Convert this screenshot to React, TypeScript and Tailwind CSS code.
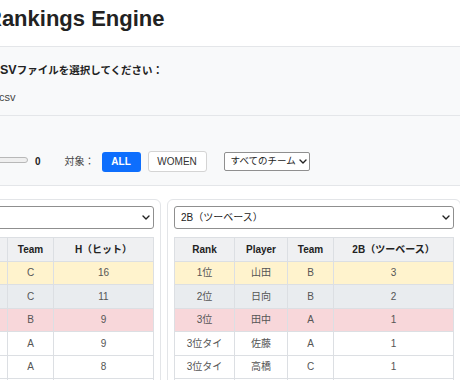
import React from "react";

type Tier = "gold" | "silver" | "bronze" | "none";

type Row = {
  rank: string;
  player: string;
  team: string;
  value: number;
  tier: Tier;
};

const tierBg: Record<Tier, string> = {
  gold: "bg-[#fff3cd]",
  silver: "bg-[#e9ecef]",
  bronze: "bg-[#f8d7da]",
  none: "bg-white",
};

const hitRows: Row[] = [
  { rank: "1位", player: "鈴木", team: "C", value: 16, tier: "gold" },
  { rank: "2位", player: "伊藤", team: "C", value: 11, tier: "silver" },
  { rank: "3位", player: "山田", team: "B", value: 9, tier: "bronze" },
  { rank: "3位タイ", player: "田中", team: "A", value: 9, tier: "none" },
  { rank: "5位", player: "佐藤", team: "A", value: 8, tier: "none" },
  { rank: "6位", player: "高橋", team: "C", value: 7, tier: "none" },
];

const doubleRows: Row[] = [
  { rank: "1位", player: "山田", team: "B", value: 3, tier: "gold" },
  { rank: "2位", player: "日向", team: "B", value: 2, tier: "silver" },
  { rank: "3位", player: "田中", team: "A", value: 1, tier: "bronze" },
  { rank: "3位タイ", player: "佐藤", team: "A", value: 1, tier: "none" },
  { rank: "3位タイ", player: "高橋", team: "C", value: 1, tier: "none" },
  { rank: "3位タイ", player: "伊藤", team: "C", value: 1, tier: "none" },
];

function Chevron() {
  return (
    <svg width="8" height="5" viewBox="0 0 8 5" fill="none" className="shrink-0">
      <path d="M1 1l3 3 3-3" stroke="#222" strokeWidth="1.4" strokeLinecap="round" strokeLinejoin="round" />
    </svg>
  );
}

function RankingCard({
  stat,
  rows,
  cols,
}: {
  stat: string;
  rows: Row[];
  cols: [string, string, string, string];
}) {
  const cell = "border border-[#dcdfe3] p-0 text-center h-[23.5px]";
  return (
    <div className="rounded-[6px] border border-[#e3e5e8] bg-white px-[6px] pt-[6px] pb-[7px]">
      <div className="flex h-[23px] items-center justify-between rounded-[3px] border border-[#8f8f8f] bg-white pl-[6px] pr-[3px] text-[10px] text-[#222]">
        <span>{stat}</span>
        <Chevron />
      </div>
      <table className="mt-[8px] w-full table-fixed border-collapse text-[10px]">
        <colgroup>
          <col className={cols[0]} />
          <col className={cols[1]} />
          <col className={cols[2]} />
          <col className={cols[3]} />
        </colgroup>
        <thead>
          <tr className="bg-[#eff0f2] font-bold text-[#222]">
            <th className={cell}>Rank</th>
            <th className={cell}>Player</th>
            <th className={cell}>Team</th>
            <th className={cell}>{stat}</th>
          </tr>
        </thead>
        <tbody className="text-[#555]">
          {rows.map((r, i) => (
            <tr key={i} className={tierBg[r.tier]}>
              <td className={cell}>{r.rank}</td>
              <td className={cell}>{r.player}</td>
              <td className={cell}>{r.team}</td>
              <td className={cell}>{r.value}</td>
            </tr>
          ))}
        </tbody>
      </table>
    </div>
  );
}

export default function App() {
  return (
    <div className="h-[380px] w-[460px] overflow-hidden bg-white font-['Liberation_Sans','Noto_Sans_CJK_JP',sans-serif] text-[#222]">
      <div className="h-[46px] pt-[6px]">
        <h1 className="-ml-[14px] whitespace-nowrap text-[22px] font-bold leading-[26px] text-[#222]">
          Rankings Engine
        </h1>
      </div>

      {/* file input */}
      <div className="h-[70px] border-y border-[#e4e6e9] bg-[#f8f9fa] pt-[15px]">
        <div className="-ml-[9px] whitespace-nowrap text-[12.5px] font-bold leading-[16px]">
          CSV<span className="text-[10.5px]">ファイルを選択してください：</span>
        </div>
        <div className="-ml-[1px] mt-[12px] text-[11px] leading-[14px] text-[#444]">csv</div>
      </div>

      {/* filters */}
      <div className="h-[70px] border-b border-[#e4e6e9] bg-[#f8f9fa] pt-[35px]">
        <div className="flex h-[21px] items-center whitespace-nowrap text-[10px]">
          <div className="-ml-[72px] mb-[4px] h-[6px] w-[100px] shrink-0 rounded-full border border-[#b8b8b8] bg-[#efefef]" />
          <span className="ml-[7px] font-bold">0</span>
          <span className="ml-[24px] text-[#444]">対象：</span>
          <button className="ml-[7px] h-[20px] w-[39px] rounded-[3px] bg-[#0d6efd] font-bold text-white">
            ALL
          </button>
          <button className="ml-[7px] h-[21px] w-[59px] rounded-[3px] border border-[#d4d4d4] bg-white text-[#333]">
            WOMEN
          </button>
          <div className="ml-[17px] flex h-[19px] w-[86px] items-center justify-between rounded-[2px] border border-[#8f8f8f] bg-white pl-[6px] pr-[2px] text-[9.5px] text-[#222]">
            <span>すべてのチーム</span>
            <Chevron />
          </div>
        </div>
      </div>

      {/* rankings */}
      <div className="-ml-[133px] mt-[13px] grid w-[594px] grid-cols-2 gap-[6px]">
        <RankingCard
          stat="H（ヒット）"
          rows={hitRows}
          cols={["w-[70px]", "w-[63px]", "w-[46px]", "w-auto"]}
        />
        <RankingCard
          stat="2B（ツーベース）"
          rows={doubleRows}
          cols={["w-[60px]", "w-[53px]", "w-[46px]", "w-auto"]}
        />
      </div>
    </div>
  );
}
